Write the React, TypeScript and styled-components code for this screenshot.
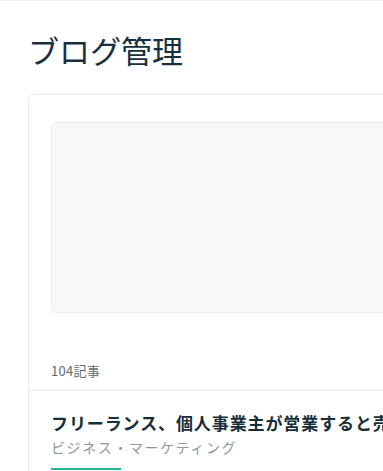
import React from 'react';
import styled, { createGlobalStyle } from 'styled-components';

const GlobalStyle = createGlobalStyle`
	html, body {
		margin: 0;
		padding: 0;
		background: #ffffff;
		overflow: hidden;
	}
	body {
		font-family: 'Noto Sans CJK JP', 'Noto Sans', sans-serif;
		color: #1c2f3a;
	}
`;

const Page = styled.div`
	width: 1000px;
	border-top: 1px solid #f0f0f0;
	padding: 0 0 0 28px;
`;

const Title = styled.h1`
	margin: 27px 0 0 0;
	font-size: 31px;
	font-weight: 400;
	line-height: 44px;
	color: #16303d;
`;

const Card = styled.div`
	margin-top: 22px;
	border: 1px solid #ebebeb;
	border-radius: 5px;
	background: #fff;
	padding-bottom: 40px;
`;

const CardTop = styled.div`
	padding: 27px 22px 0 22px;
`;

const Placeholder = styled.div`
	height: 189px;
	border: 1px solid #ececec;
	border-radius: 5px;
	background: #f8f8f8;
`;

const Count = styled.div`
	margin-top: 48px;
	padding-bottom: 9px;
	font-size: 13px;
	line-height: 20px;
	letter-spacing: 0.3px;
	color: #5e6e76;
`;

const Divider = styled.div`
	height: 1px;
	background: #ebebeb;
`;

const Article = styled.div`
	padding: 20px 22px 0 22px;
`;

const ArticleTitle = styled.div`
	font-size: 17px;
	font-weight: 700;
	line-height: 24px;
	letter-spacing: 0.9px;
	color: #172e3a;
	white-space: nowrap;
`;

const Category = styled.div`
	margin-top: 2px;
	font-size: 14px;
	line-height: 20px;
	letter-spacing: 1.6px;
	color: #8d999f;
`;

const Accent = styled.div<{ $width: number }>`
	margin-top: 11px;
	width: ${(p) => p.$width}px;
	height: 2px;
	background: #2bb59a;
`;

const App = () => {
	return (
		<>
			<GlobalStyle />
			<Page>
				<Title>ブログ管理</Title>
				<Card>
					<CardTop>
						<Placeholder />
						<Count>104記事</Count>
					</CardTop>
					<Divider />
					<Article>
						<ArticleTitle>
							フリーランス、個人事業主が営業すると売上が上がる理由
						</ArticleTitle>
						<Category>ビジネス・マーケティング</Category>
						<Accent $width={70} />
					</Article>
				</Card>
			</Page>
		</>
	);
};

export default App;
